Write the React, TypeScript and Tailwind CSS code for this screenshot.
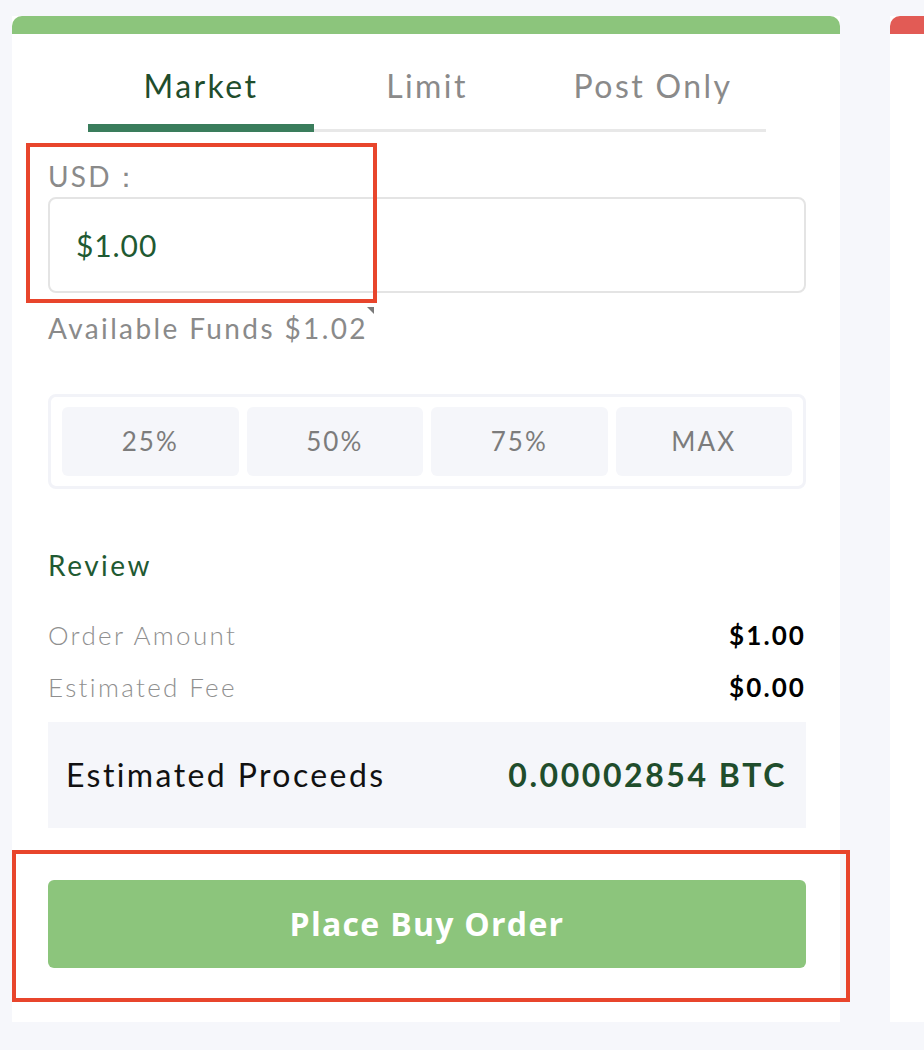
const tabs = ["Market", "Limit", "Post Only"];
const pcts = ["25%", "50%", "75%", "MAX"];

export default function App() {
  return (
    <div className="min-h-[1050px] bg-[#f6f7fb] pt-[16px] font-['Lato',sans-serif]">
      <div className="flex items-start">
        <div className="relative ml-[12px] w-[828px] shrink-0 bg-white">
          <div className="h-[18px] rounded-t-[10px] bg-[#8cc57c]" />
          <div className="pl-[36px] pr-[34px] pb-[54px]">
            <div className="mx-[40px] flex">
              {tabs.map((t, i) => (
                <div key={t} className="flex flex-1 flex-col items-center pt-[32px]">
                  <span
                    className={`text-[32px] leading-[40px] tracking-[0.075em] ${i === 0 ? "text-[#1f4d2c]" : "text-[#8a8a8a]"}`}
                  >
                    {t}
                  </span>
                  <div className="mt-[18px] h-[8px] w-full">
                    {i === 0 ? (
                      <div className="h-full w-full bg-[#3a7d5c]" />
                    ) : (
                      <div className="mt-[5px] h-[3px] w-full bg-[#e8e8e8]" />
                    )}
                  </div>
                </div>
              ))}
            </div>

            <div className="mt-[26px] text-[28px] leading-[36px] tracking-[0.08em] text-[#8a8a8a]">USD：</div>
            <div className="mt-[3px] flex h-[96px] items-center rounded-[8px] border-2 border-[#e4e4e4] pl-[26px]">
              <span className="text-[30px] tracking-[0.03em] text-[#1f5a32]">$1.00</span>
            </div>
            <div className="relative mt-[17px] inline-block text-[28px] leading-[36px] tracking-[0.085em] text-[#8a8a8a]">
              Available Funds $1.02
              <span className="absolute right-[-6px] top-[-3px] h-0 w-0 border-l-[7px] border-t-[7px] border-l-transparent border-t-[#7a7a7a]" />
            </div>

            <div className="mt-[48px] flex gap-[8px] rounded-[8px] border-[3px] border-[#f2f3f8] px-[11px] py-[10px]">
              {pcts.map((p) => (
                <div
                  key={p}
                  className="flex h-[69px] flex-1 items-center justify-center rounded-[6px] bg-[#f5f6fa] text-[26px] tracking-[0.08em] text-[#7c7c7c]"
                >
                  {p}
                </div>
              ))}
            </div>

            <div className="mt-[58px] text-[28px] leading-[36px] tracking-[0.09em] text-[#1f5a32]">Review</div>
            <div className="mt-[26px]">
              <div className="flex h-[52px] items-center justify-between">
                <span className="text-[26px] font-light tracking-[0.09em] text-[#8f8f8f]">Order Amount</span>
                <span className="text-[26px] font-bold tracking-[0.08em] text-black">$1.00</span>
              </div>
              <div className="flex h-[52px] items-center justify-between">
                <span className="text-[26px] font-light tracking-[0.09em] text-[#8f8f8f]">Estimated Fee</span>
                <span className="text-[26px] font-bold tracking-[0.08em] text-black">$0.00</span>
              </div>
            </div>
            <div className="mt-[9px] flex h-[106px] items-center justify-between bg-[#f5f6fa] pl-[18px] pr-[19px]">
              <span className="text-[32px] tracking-[0.075em] text-[#111]">Estimated Proceeds</span>
              <span className="text-[32px] font-bold tracking-[0.08em] text-[#1f4d2c]">0.00002854 BTC</span>
            </div>

            <button className="mt-[52px] flex h-[88px] w-full items-center justify-center rounded-[6px] bg-[#8cc57c] font-['Open_Sans',sans-serif] text-[32px] font-bold tracking-[0.04em] text-white">
              Place Buy Order
            </button>
          </div>

          <div className="pointer-events-none absolute left-[14px] top-[127px] h-[160px] w-[351px] border-4 border-[#e8452c]" />
          <div className="pointer-events-none absolute left-0 top-[834px] h-[152px] w-[838px] border-4 border-[#e8452c]" />
        </div>

        <div className="ml-[50px] h-[1006px] flex-1 bg-white">
          <div className="h-[18px] rounded-tl-[10px] bg-[#e25b55]" />
        </div>
      </div>
    </div>
  );
}
